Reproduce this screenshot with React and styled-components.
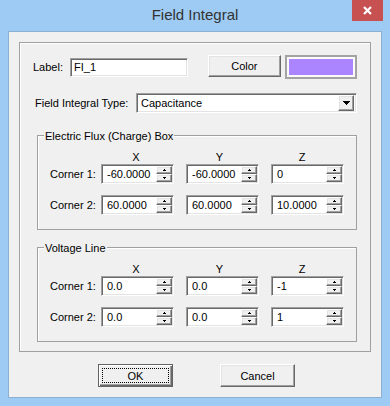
import styled, { createGlobalStyle } from 'styled-components';

const GlobalStyle = createGlobalStyle`
  html, body {
    margin: 0;
    padding: 0;
    background: #9dcbf3;
  }
  * {
    box-sizing: border-box;
  }
`;

const raised = `
  border: 1px solid;
  border-color: #ffffff #696969 #696969 #ffffff;
  box-shadow: inset -1px -1px 0 #a0a0a0, inset 1px 1px 0 #e3e3e3;
  background: #f0f0f0;
`;

const sunken = `
  border: 1px solid;
  border-color: #a0a0a0 #ffffff #ffffff #a0a0a0;
  box-shadow: inset 1px 1px 0 #696969, inset -1px -1px 0 #e3e3e3;
  background: #ffffff;
`;

const Window = styled.div`
  width: 390px;
  height: 406px;
  background: #9dcbf3;
  display: flex;
  flex-direction: column;
  font-family: "Liberation Sans", Arial, sans-serif;
  font-size: 11px;
  color: #000;
`;

const TitleBar = styled.div`
  height: 31px;
  display: grid;
  grid-template-columns: 1fr auto 1fr;
  align-items: start;
`;

const Title = styled.div`
  grid-column: 2;
  font-size: 15px;
  line-height: 30px;
  color: #333;
`;

const CloseButton = styled.div`
  grid-column: 3;
  justify-self: end;
  margin-right: 7px;
  width: 31px;
  height: 21px;
  background: #c75050;
  display: flex;
  align-items: center;
  justify-content: center;
`;

const Client = styled.div`
  margin: 0 8px;
  height: 367px;
  border: 1px solid #8cb0d2;
  background: #f0f0f0;
  padding: 10px;
  display: flex;
  flex-direction: column;
`;

const Panel = styled.div`
  height: 312px;
  border: 1px solid #a0a0a0;
  box-shadow: inset 1px 1px 0 #fff;
  padding: 12px 13px 0 13px;
  display: flex;
  flex-direction: column;
`;

const TopRow = styled.div`
  display: flex;
  align-items: flex-start;
  height: 24px;
`;

const Caption = styled.div`
  width: ${p => p.$width}px;
  padding-left: ${p => p.$indent || 0}px;
  height: ${p => p.$height || 20}px;
  line-height: ${p => p.$height || 20}px;
  margin-top: ${p => p.$top || 0}px;
  white-space: nowrap;
  flex-shrink: 0;
`;

const TextBox = styled.div`
  ${sunken}
  width: 118px;
  height: 19px;
  margin-top: 3px;
  padding-left: 3px;
  line-height: 17px;
`;

const PushButton = styled.button`
  ${raised}
  font: inherit;
  color: #000;
  padding: 0;
  margin-left: ${p => p.$left || 0}px;
  width: ${p => p.$width || 75}px;
  height: ${p => p.$height || 23}px;
  display: flex;
  align-items: center;
  justify-content: center;
  position: relative;

  ${p => p.$default && `
    border: 1px solid #646464;
    box-shadow: inset 1px 1px 0 #ffffff, inset -1px -1px 0 #696969, inset -2px -2px 0 #a0a0a0;
    &::after {
      content: '';
      position: absolute;
      inset: 3px 3px 3px 3px;
      border: 1px dotted #000;
    }
  `}
`;

const Swatch = styled.div`
  margin-left: 4px;
  width: 72px;
  height: 24px;
  border: 2px solid #a3a3a3;
  padding: 2px;
  background: #fbfbfb;
`;

const SwatchFill = styled.div`
  width: 100%;
  height: 100%;
  background: ${p => p.$color};
`;

const TypeRow = styled.div`
  display: flex;
  align-items: center;
  height: 20px;
  margin-top: 14px;
`;

const Select = styled.div`
  ${sunken}
  width: 221px;
  height: 20px;
  display: flex;
  align-items: center;
  justify-content: space-between;
  padding: 0 2px 0 4px;
`;

const DropButton = styled.div`
  ${raised}
  width: 16px;
  height: 16px;
  display: flex;
  align-items: center;
  justify-content: center;
`;

const Group = styled.fieldset`
  position: relative;
  margin: ${p => p.$top}px 0 0 4px;
  width: 320px;
  height: 95px;
  border: 1px solid #a0a0a0;
  box-shadow: inset 1px 1px 0 #fff;
  padding: 15px 0 0 12px;
  display: flex;
  flex-direction: column;
  min-width: 0;
`;

const GroupTitle = styled.div`
  position: absolute;
  top: -6px;
  left: 6px;
  padding: 0 1px;
  line-height: 13px;
  background: #f0f0f0;
  white-space: nowrap;
`;

const AxisRow = styled.div`
  display: flex;
  gap: 12px;
  height: 13px;
  line-height: 13px;
  padding-left: 51px;
`;

const AxisLabel = styled.div`
  width: 73px;
  text-align: center;
  padding-right: ${p => p.$nudge}px;
`;

const CoordRow = styled.div`
  display: flex;
  align-items: center;
  height: 20px;
  & + & {
    margin-top: 11px;
  }
`;

const Fields = styled.div`
  display: flex;
  gap: 12px;
`;

const SpinField = styled.div`
  ${sunken}
  width: 73px;
  height: 20px;
  display: flex;
  align-items: center;
  padding: 2px 1px 2px 2px;
`;

const SpinValue = styled.div`
  flex: 1;
  padding-left: 3px;
  line-height: 16px;
  white-space: nowrap;
`;

const SpinButtons = styled.div`
  width: 16px;
  height: 16px;
  display: flex;
  flex-direction: column;
`;

const SpinButton = styled.div`
  ${raised}
  height: 8px;
  display: flex;
  align-items: center;
  justify-content: center;
`;

const Footer = styled.div`
  display: flex;
  justify-content: center;
  gap: 47px;
  margin-top: 12px;
  padding-left: 3px;
`;

const TinyArrow = ({ down }) => (
  <svg width="3" height="2" viewBox="0 0 3 2" shapeRendering="crispEdges">
    <rect x="1" y={down ? 1 : 0} width="1" height="1" fill="#000" />
    <rect x="0" y={down ? 0 : 1} width="3" height="1" fill="#000" />
  </svg>
);

const DropArrow = () => (
  <svg width="7" height="4" viewBox="0 0 7 4" shapeRendering="crispEdges">
    <rect x="0" y="0" width="7" height="1" fill="#000" />
    <rect x="1" y="1" width="5" height="1" fill="#000" />
    <rect x="2" y="2" width="3" height="1" fill="#000" />
    <rect x="3" y="3" width="1" height="1" fill="#000" />
  </svg>
);

const CloseGlyph = () => (
  <svg width="9" height="9" viewBox="0 0 9 9">
    <path d="M1 1 L8 8 M8 1 L1 8" stroke="#fff" strokeWidth="2.2" />
  </svg>
);

function Spin({ value }) {
  return (
    <SpinField>
      <SpinValue>{value}</SpinValue>
      <SpinButtons>
        <SpinButton><TinyArrow /></SpinButton>
        <SpinButton><TinyArrow down /></SpinButton>
      </SpinButtons>
    </SpinField>
  );
}

function CornerBox({ title, top, rows }) {
  return (
    <Group $top={top}>
      <GroupTitle>{title}</GroupTitle>
      <AxisRow>
        <AxisLabel $nudge={3}>X</AxisLabel>
        <AxisLabel $nudge={6}>Y</AxisLabel>
        <AxisLabel $nudge={11}>Z</AxisLabel>
      </AxisRow>
      {rows.map((vals, i) => (
        <CoordRow key={i}>
          <Caption $width={51}>Corner {i + 1}:</Caption>
          <Fields>
            {vals.map((v, j) => <Spin key={j} value={v} />)}
          </Fields>
        </CoordRow>
      ))}
    </Group>
  );
}

export default function App() {
  return (
    <>
      <GlobalStyle />
      <Window>
        <TitleBar>
          <Title>Field Integral</Title>
          <CloseButton><CloseGlyph /></CloseButton>
        </TitleBar>
        <Client>
          <Panel>
            <TopRow>
              <Caption $width={37} $height={19} $top={3}>Label:</Caption>
              <TextBox>FI_1</TextBox>
              <PushButton $left={20} $width={74} $height={22}>Color</PushButton>
              <Swatch><SwatchFill $color="#aa85ff" /></Swatch>
            </TopRow>
            <TypeRow>
              <Caption $width={103} $indent={2}>Field Integral Type:</Caption>
              <Select>
                <span>Capacitance</span>
                <DropButton><DropArrow /></DropButton>
              </Select>
            </TypeRow>
            <CornerBox
              title="Electric Flux (Charge) Box"
              top={22}
              rows={[['-60.0000', '-60.0000', '0'], ['60.0000', '60.0000', '10.0000']]}
            />
            <CornerBox
              title="Voltage Line"
              top={17}
              rows={[['0.0', '0.0', '-1'], ['0.0', '0.0', '1']]}
            />
          </Panel>
          <Footer>
            <PushButton $default>OK</PushButton>
            <PushButton>Cancel</PushButton>
          </Footer>
        </Client>
      </Window>
    </>
  );
}
